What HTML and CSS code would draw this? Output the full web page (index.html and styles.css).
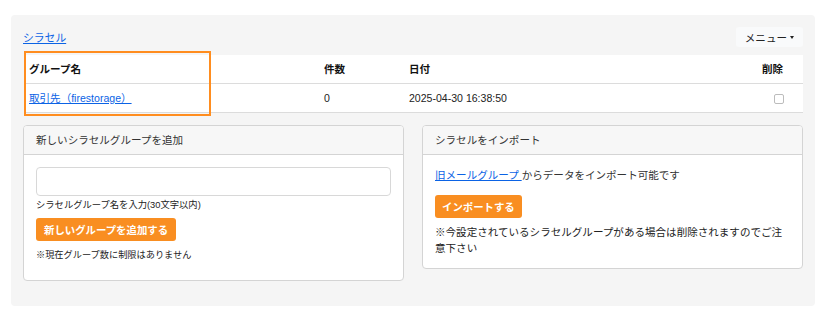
FILE: index.html
```html
<!DOCTYPE html>
<html lang="ja">
<head>
<meta charset="utf-8">
<title>シラセル</title>
<link rel="stylesheet" href="styles.css">
</head>
<body>
<div class="panel">
  <div class="topbar">
    <a href="#" class="link crumb">シラセル</a>
    <button class="menu-btn">メニュー<span class="caret"></span></button>
  </div>
  <div class="table-wrap">
    <table class="groups">
      <colgroup>
        <col class="c-name">
        <col class="c-count">
        <col class="c-date">
        <col class="c-del">
      </colgroup>
      <thead>
        <tr>
          <th>グループ名</th>
          <th>件数</th>
          <th>日付</th>
          <th class="del">削除</th>
        </tr>
      </thead>
      <tbody>
        <tr>
          <td><a href="#" class="link">取引先（firestorage） </a></td>
          <td>0</td>
          <td>2025-04-30 16:38:50</td>
          <td class="del-cell"><input type="checkbox" class="check"></td>
        </tr>
      </tbody>
    </table>
    <div class="highlight"></div>
  </div>
  <div class="cards">
    <div class="card">
      <div class="card-head">新しいシラセルグループを追加</div>
      <div class="card-body">
        <input type="text" class="text-input">
        <div class="caption">シラセルグループ名を入力(30文字以内)</div>
        <button class="btn btn-add">新しいグループを追加する</button>
        <div class="note small">※現在グループ数に制限はありません</div>
      </div>
    </div>
    <div class="card">
      <div class="card-head">シラセルをインポート</div>
      <div class="card-body">
        <div class="line"><a href="#" class="link">旧メールグループ </a>からデータをインポート可能です</div>
        <button class="btn btn-import">インポートする</button>
        <div class="note wide">※今設定されているシラセルグループがある場合は削除されますのでご注意下さい</div>
      </div>
    </div>
  </div>
</div>
</body>
</html>
```
FILE: styles.css
```css
* { box-sizing: border-box; }
html, body { margin: 0; padding: 0; background: #fff; }
body {
  font-family: "Liberation Sans", "Noto Sans CJK JP", sans-serif;
  font-size: 10.55px;
  color: #222;
}
.panel {
  margin: 15px 0 0 11px;
  width: 804px;
  background: #f5f5f5;
  border-radius: 4px;
  padding: 12px 12px 25px 12px;
}
.topbar {
  display: flex;
  justify-content: space-between;
  align-items: center;
  height: 20px;
  margin-bottom: 8px;
}
.link { color: #0b63e5; text-decoration: underline; }
.crumb { font-size: 10.8px; }
.menu-btn {
  font-family: inherit;
  font-size: 10.55px;
  color: #222;
  background: #f9fafb;
  border: none;
  border-radius: 3px;
  height: 20px;
  padding: 0 9px 0 9px;
  display: flex;
  align-items: center;
  gap: 2px;
}
.caret {
  display: inline-block;
  width: 0; height: 0;
  border-left: 2.5px solid transparent;
  border-right: 2.5px solid transparent;
  border-top: 3px solid #222;
  margin-left: 1px;
}
.table-wrap {
  position: relative;
  margin-left: 1px;
}
.groups {
  width: 779px;
  border-collapse: separate;
  border-spacing: 0;
  background: #fff;
  table-layout: fixed;
}
.c-name { width: 295px; }
.c-count { width: 85px; }
.c-del { width: 60px; }
.groups th, .groups td {
  text-align: left;
  padding: 0 5px;
  line-height: 28px;
  height: 29px;
  border-bottom: 1px solid #dcdcdc;
  white-space: nowrap;
}
.groups th { font-weight: bold; color: #111; }
.groups td { color: #222; }
.groups th.del { text-align: right; padding-right: 20px; }
.groups td.del-cell { text-align: right; padding-right: 19px; }
.check {
  appearance: none;
  -webkit-appearance: none;
  width: 10px; height: 10px;
  margin: 0;
  border: 1px solid #bcbcbc;
  border-radius: 2px;
  background: #fff;
  vertical-align: middle;
}
.highlight {
  position: absolute;
  left: 0; top: -4px;
  width: 187px; height: 65px;
  border: 2px solid #ff8d1f;
  pointer-events: none;
}
.cards {
  display: flex;
  align-items: flex-start;
  gap: 18px;
  margin-top: 12px;
}
.card {
  flex: 1;
  background: #fff;
  border: 1px solid #d4d4d4;
  border-radius: 4px;
  overflow: hidden;
}
.card-head {
  background: #f7f7f7;
  border-bottom: 1px solid #d4d4d4;
  height: 29px;
  line-height: 28px;
  padding: 0 12px;
  color: #333;
}
.card-body { padding: 12px 12px 18px 12px; }
.card:last-child .card-body { padding-bottom: 12px; }
.text-input {
  display: block;
  width: 100%;
  height: 29px;
  border: 1px solid #d8d8d8;
  border-radius: 4px;
  background: #fff;
  margin: 0;
}
.caption {
  font-size: 9.3px;
  line-height: 14px;
  margin-top: 2px;
  color: #222;
}
.btn {
  display: block;
  font-family: inherit;
  font-weight: bold;
  font-size: 10.4px;
  color: #fff;
  background: #f98e21;
  border: none;
  border-radius: 3px;
  height: 23px;
  padding: 0 7px;
}
.btn-add { margin-top: 6px; padding: 0 8px; }
.small {
  font-size: 9.2px;
  line-height: 14px;
  margin-top: 7px;
  color: #222;
}
.line { line-height: 16px; color: #333; }
.btn-import { margin-top: 12px; }
.wide {
  line-height: 16px;
  margin-top: 6px;
  color: #222;
}
```
